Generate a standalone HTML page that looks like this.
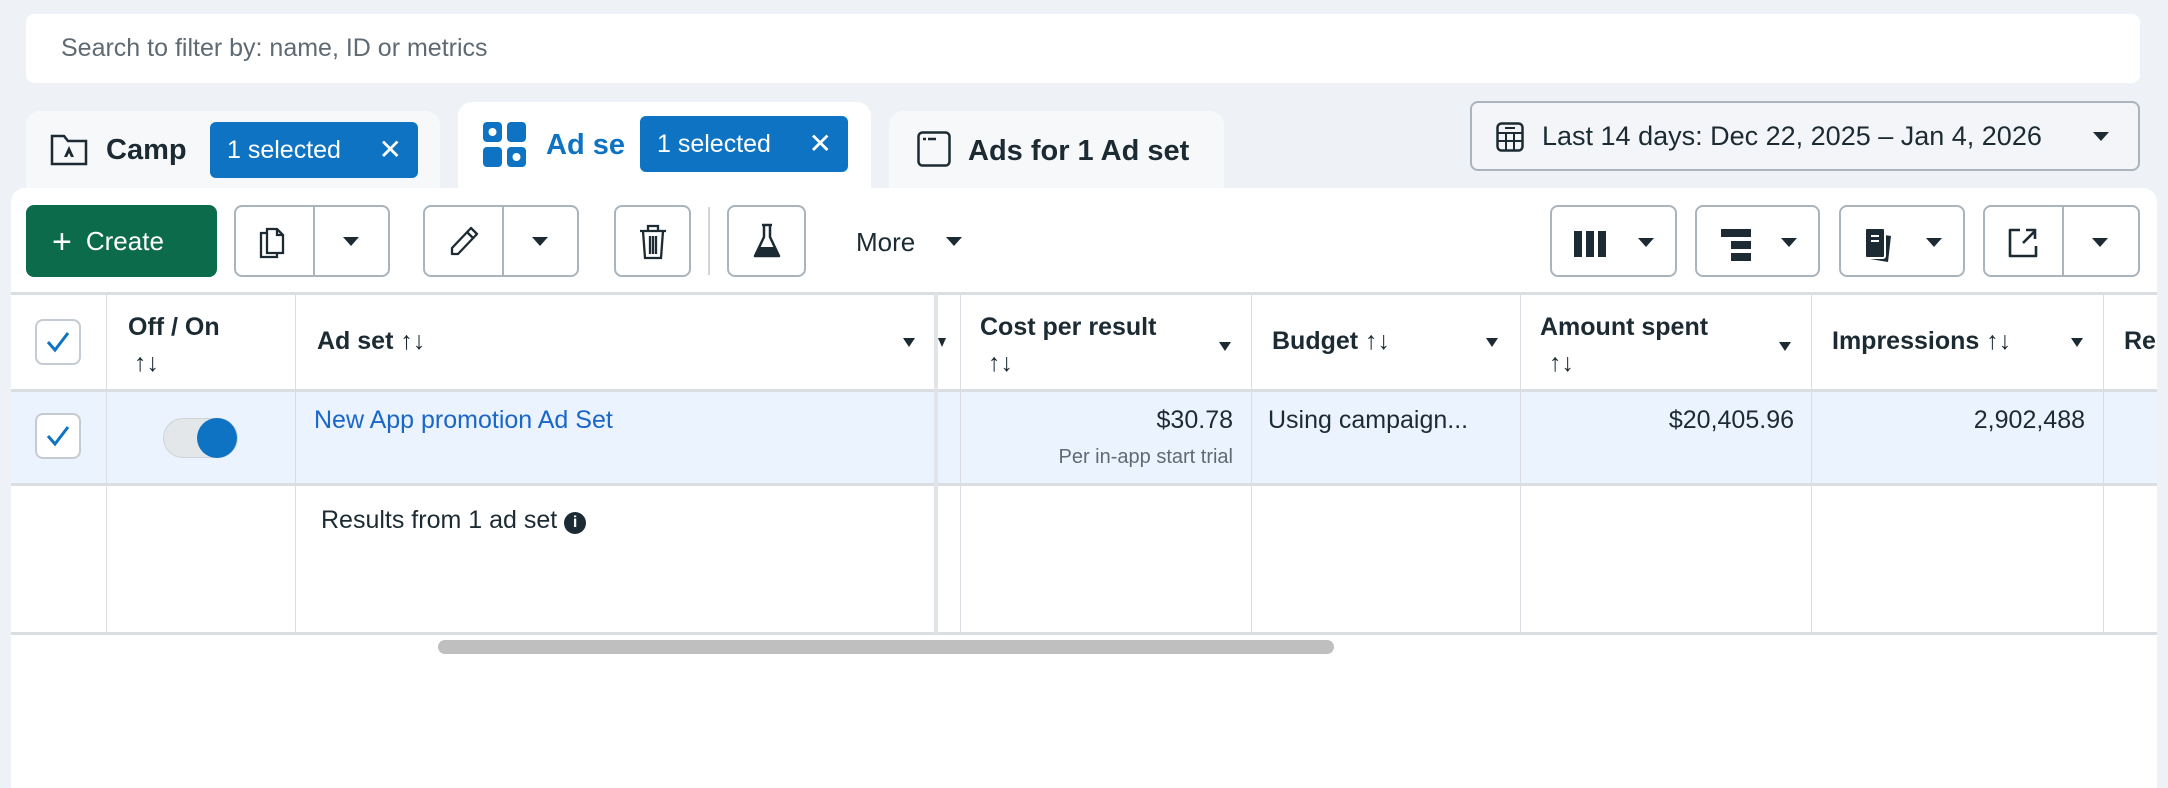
<!DOCTYPE html>
<html><head><meta charset="utf-8"><style>
*{box-sizing:border-box;margin:0;padding:0}
body{width:2168px;height:772px;background:#eef1f6;font-family:"Liberation Sans",sans-serif;color:#1c2b33;position:relative;overflow:hidden}
.a{position:absolute}
.search{left:26px;top:14px;width:2114px;height:69px;background:#fff;border-radius:8px}
.search span{position:absolute;left:35px;top:20px;font-size:25px;color:#5f6a73}
.tab{background:#f7f8fa;border-radius:14px 14px 0 0;height:80px}
.tab.act{background:#fff}
.badge{background:#0d73c2;color:#fff;border-radius:6px;font-size:25px;height:56px;line-height:56px;padding-left:17px}
.badge b{position:absolute;right:16px;top:0;font-weight:normal;font-size:28px}
.tt{font-size:29px;font-weight:bold;top:134px}
.panel{left:11px;top:188px;width:2146px;height:600px;background:#fff;border-radius:14px 14px 0 0}
.btn{border:2px solid #aab4bd;border-radius:8px;height:72px;top:205px;background:#fff}
.dv{position:absolute;top:0;bottom:0;width:2px;background:#aab4bd}
.car{position:absolute;width:0;height:0;border-left:8px solid transparent;border-right:8px solid transparent;border-top:9px solid #1c2b33}
.line{position:absolute;background:#dadde1}
.h{font-size:25px;font-weight:bold;position:absolute}
.c{font-size:25px;position:absolute}
.cb{position:absolute;width:46px;height:46px;border:2px solid #c4cbd2;border-radius:8px;background:#fff}
</style></head><body>
<div class="a search"><span>Search to filter by: name, ID or metrics</span></div>

<div class="a tab" style="left:26px;top:111px;width:414px"></div>
<svg class="a" style="left:50px;top:132px" width="38" height="34" viewBox="0 0 38 34"><path d="M2 4h12l4 5h18v23H2z" fill="none" stroke="#1c2b33" stroke-width="2.5"/><path d="M19 14l-5 11h3l2-4 2 4h3z" fill="#1c2b33"/></svg>
<div class="a tt" style="left:106px;top:134px">Camp</div>
<div class="a badge" style="left:210px;top:122px;width:208px">1 selected<b>✕</b></div>

<div class="a tab act" style="left:458px;top:102px;width:413px;height:90px"></div>
<svg class="a" style="left:483px;top:122px" width="44" height="46" viewBox="0 0 44 46"><rect x="0" y="0" width="19" height="20" rx="4" fill="#0d73c2"/><rect x="24" y="0" width="19" height="20" rx="4" fill="#0d73c2"/><rect x="0" y="25" width="19" height="20" rx="4" fill="#0d73c2"/><rect x="24" y="25" width="19" height="20" rx="4" fill="#0d73c2"/><circle cx="9.5" cy="10" r="4" fill="#fff"/><circle cx="33.5" cy="35" r="4" fill="#fff"/></svg>
<div class="a tt" style="left:546px;top:129px;color:#0d73c2">Ad se</div>
<div class="a badge" style="left:640px;top:116px;width:208px">1 selected<b>✕</b></div>

<div class="a tab" style="left:889px;top:111px;width:335px"></div>
<svg class="a" style="left:917px;top:131px" width="34" height="36" viewBox="0 0 34 36"><rect x="1.5" y="1.5" width="31" height="33" rx="4" fill="none" stroke="#1c2b33" stroke-width="2.5"/><path d="M6 8h3M11 8h8" stroke="#1c2b33" stroke-width="2.5"/></svg>
<div class="a tt" style="left:968px;top:135px">Ads for 1 Ad set</div>

<div class="a" style="left:1470px;top:101px;width:670px;height:70px;border:2px solid #aab4bd;border-radius:8px;background:#f3f5f8"></div>
<svg class="a" style="left:1496px;top:122px" width="28" height="30" viewBox="0 0 28 30"><rect x="1.5" y="1.5" width="25" height="27" rx="4" fill="none" stroke="#1c2b33" stroke-width="2.5"/><path d="M2 11h24M2 19h24M10 11v17M18 11v17M9 6h10" stroke="#1c2b33" stroke-width="2"/></svg>
<div class="a" style="left:1542px;top:121px;font-size:27px">Last 14 days: Dec 22, 2025 – Jan 4, 2026</div>
<div class="car" style="left:2093px;top:132px"></div>

<div class="a panel"></div>

<div class="a" style="left:26px;top:205px;width:191px;height:72px;background:#0b6b4b;border-radius:8px;color:#fff;font-size:26px;line-height:72px;padding-left:26px"><span style="font-size:34px;vertical-align:-3px;margin-right:14px">+</span>Create</div>
<div class="a btn" style="left:234px;width:156px"><div class="dv" style="left:77px"></div>
<svg class="a" style="left:21px;top:18px" width="36" height="34" viewBox="0 0 36 34"><path d="M10 4h10l6 6v18H10z" fill="none" stroke="#1c2b33" stroke-width="2.3"/><path d="M20 4v6h6M10 8H4v24h16v-4" fill="none" stroke="#1c2b33" stroke-width="2.3"/></svg>
<div class="car" style="left:107px;top:30px"></div></div>
<div class="a btn" style="left:423px;width:156px"><div class="dv" style="left:77px"></div>
<svg class="a" style="left:22px;top:18px" width="34" height="34" viewBox="0 0 34 34"><path d="M24 3l6 6L11 29H5v-6z M20 7l6 6" fill="none" stroke="#1c2b33" stroke-width="2.3" stroke-linejoin="round"/></svg>
<div class="car" style="left:107px;top:30px"></div></div>
<div class="a btn" style="left:614px;width:77px">
<svg class="a" style="left:21px;top:16px" width="32" height="38" viewBox="0 0 32 38"><path d="M3 8h26M11 8V3h10v5M6 8l2 27h16l2-27M13 13v18M19 13v18M16 13v18" fill="none" stroke="#1c2b33" stroke-width="2.3"/></svg></div>
<div class="line" style="left:708px;top:207px;width:2px;height:68px;background:#cfd4d9"></div>
<div class="a btn" style="left:727px;width:79px">
<svg class="a" style="left:22px;top:15px" width="32" height="40" viewBox="0 0 32 40"><path d="M11 3h10M13 3v12L4 34h24L19 15V3" fill="none" stroke="#1c2b33" stroke-width="2.5" stroke-linejoin="round"/><path d="M8 25h16l4 9H4z" fill="#1c2b33"/></svg></div>
<div class="a" style="left:856px;top:227px;font-size:26px">More</div>
<div class="car" style="left:946px;top:237px"></div>

<div class="a btn" style="left:1550px;width:127px"><svg class="a" style="left:22px;top:24px" width="34" height="26"><rect x="0" y="0" width="8" height="26" fill="#1c2b33"/><rect x="12" y="0" width="8" height="26" fill="#1c2b33"/><rect x="24" y="0" width="8" height="26" fill="#1c2b33"/></svg><div class="car" style="left:86px;top:31px"></div></div>
<div class="a btn" style="left:1695px;width:125px"><svg class="a" style="left:24px;top:22px" width="30" height="32"><rect x="0" y="0" width="30" height="8" fill="#1c2b33"/><rect x="10" y="12" width="20" height="8" fill="#1c2b33"/><rect x="10" y="24" width="20" height="8" fill="#1c2b33"/></svg><div class="car" style="left:84px;top:31px"></div></div>
<div class="a btn" style="left:1839px;width:126px"><svg class="a" style="left:22px;top:20px" width="34" height="36" viewBox="0 0 34 36"><path d="M8 6l20 3-3 26-18-3z" fill="#1c2b33"/><rect x="2" y="1" width="20" height="30" rx="2" fill="#1c2b33" stroke="#fff" stroke-width="2"/><path d="M8 9h8M8 14h8" stroke="#fff" stroke-width="2"/></svg><div class="car" style="left:85px;top:31px"></div></div>
<div class="a btn" style="left:1983px;width:157px"><div class="dv" style="left:77px"></div><svg class="a" style="left:22px;top:20px" width="32" height="32" viewBox="0 0 32 32"><path d="M13 3H3v26h26V19" fill="none" stroke="#1c2b33" stroke-width="2.6" stroke-linejoin="round"/><path d="M16 16L28 4M19 3h9v9" fill="none" stroke="#1c2b33" stroke-width="2.6"/></svg><div class="car" style="left:107px;top:31px"></div></div>

<!-- table -->
<div class="a" style="left:11px;top:390px;width:2146px;height:94px;background:#ebf3fe"></div>
<div class="line" style="left:11px;top:292px;width:2146px;height:3px"></div>
<div class="line" style="left:11px;top:389px;width:2146px;height:3px"></div>
<div class="line" style="left:11px;top:483px;width:2146px;height:3px"></div>
<div class="line" style="left:11px;top:632px;width:2146px;height:3px"></div>
<div class="line" style="left:106px;top:294px;width:1px;height:339px"></div>
<div class="line" style="left:295px;top:294px;width:1px;height:339px"></div>
<div class="line" style="left:934px;top:294px;width:4px;height:339px;background:#e2e5e8"></div>
<div class="line" style="left:960px;top:294px;width:1px;height:339px"></div>
<div class="line" style="left:1251px;top:294px;width:1px;height:339px"></div>
<div class="line" style="left:1520px;top:294px;width:1px;height:339px"></div>
<div class="line" style="left:1811px;top:294px;width:1px;height:339px"></div>
<div class="line" style="left:2103px;top:294px;width:1px;height:339px"></div>

<div class="cb" style="left:35px;top:319px"><svg width="42" height="42" viewBox="0 0 42 42"><path d="M11 21l7 8 13-17" fill="none" stroke="#0d73c2" stroke-width="3"/></svg></div>
<div class="cb" style="left:35px;top:413px"><svg width="42" height="42" viewBox="0 0 42 42"><path d="M11 21l7 8 13-17" fill="none" stroke="#0d73c2" stroke-width="3"/></svg></div>

<div class="h" style="left:128px;top:313px">Off / On</div>
<div class="h" style="left:134px;top:349px">↑↓</div>
<div class="h" style="left:317px;top:327px">Ad set ↑↓</div>
<div class="car" style="left:903px;top:338px;border-width:9px 6px 0"></div>
<div class="car" style="left:938px;top:338px;border-width:9px 4px 0"></div>
<div class="h" style="left:980px;top:313px">Cost per result</div>
<div class="h" style="left:988px;top:349px">↑↓</div>
<div class="car" style="left:1219px;top:342px;border-width:9px 6px 0"></div>
<div class="h" style="left:1272px;top:327px">Budget ↑↓</div>
<div class="car" style="left:1486px;top:338px;border-width:9px 6px 0"></div>
<div class="h" style="left:1540px;top:313px">Amount spent</div>
<div class="h" style="left:1549px;top:349px">↑↓</div>
<div class="car" style="left:1779px;top:342px;border-width:9px 6px 0"></div>
<div class="h" style="left:1832px;top:327px">Impressions ↑↓</div>
<div class="car" style="left:2071px;top:338px;border-width:9px 6px 0"></div>
<div class="h" style="left:2124px;top:327px">Re</div>

<div class="a" style="left:163px;top:418px;width:75px;height:40px;border-radius:20px;background:#e4e7ea;border:1px solid #cfd4d9"></div>
<div class="a" style="left:197px;top:418px;width:40px;height:40px;border-radius:20px;background:#0d73c2"></div>
<div class="c" style="left:314px;top:406px;color:#1a66c9">New App promotion Ad Set</div>
<div class="c" style="left:1080px;top:406px;width:153px;text-align:right">$30.78</div>
<div class="a" style="left:980px;top:446px;width:253px;text-align:right;font-size:20px;color:#606a72">Per in-app start trial</div>
<div class="c" style="left:1268px;top:406px">Using campaign...</div>
<div class="c" style="left:1550px;top:406px;width:244px;text-align:right">$20,405.96</div>
<div class="c" style="left:1830px;top:406px;width:255px;text-align:right">2,902,488</div>
<div class="c" style="left:321px;top:506px">Results from 1 ad set <span style="display:inline-block;width:22px;height:22px;border-radius:11px;background:#1c2b33;color:#fff;font-size:16px;text-align:center;line-height:22px;font-weight:bold;vertical-align:1px">i</span></div>

<div class="a" style="left:438px;top:640px;width:896px;height:14px;border-radius:7px;background:#bfbfbf"></div>
</body></html>
